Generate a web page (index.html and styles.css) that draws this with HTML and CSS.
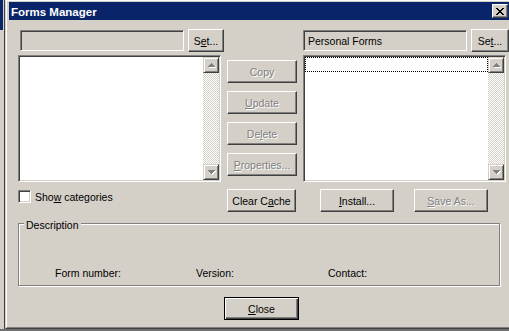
FILE: index.html
```html
<!DOCTYPE html>
<html>
<head>
<meta charset="utf-8">
<title>Forms Manager</title>
<link rel="stylesheet" href="styles.css">
</head>
<body>
<div class="screen">
  <div class="behind"><div class="behind-cap"></div></div>
  <div class="window">
    <div class="window-inner">
      <div class="titlebar">
        <span class="title">Forms Manager</span>
        <div class="cap-btn">
          <svg width="8" height="7" viewBox="0 0 8 7" shape-rendering="crispEdges"><path fill="#000" d="M0 0h2v1h-2z M6 0h2v1h-2z M1 1h2v1h-2z M5 1h2v1h-2z M2 2h4v1h-4z M3 3h2v1h-2z M2 4h4v1h-4z M1 5h2v1h-2z M5 5h2v1h-2z M0 6h2v1h-2z M6 6h2v1h-2z"/></svg>
        </div>
      </div>
      <div class="content">
        <div class="columns">
          <div class="col-side">
            <div class="field-row">
              <div class="field"></div>
              <div class="btn btn-set-left">S<u>e</u>t...</div>
            </div>
            <div class="listbox">
              <div class="list-area"></div>
              <div class="scrollbar">
                <div class="sb-btn"><svg width="8" height="5" viewBox="0 0 8 5" shape-rendering="crispEdges"><path fill="#fff" d="M4 1h1v1h1v1h1v1h1v1H1V4h1V3h1V2h1z"/><path fill="#808080" d="M3 0h1v1h1v1h1v1h1v1H0V3h1V2h1V1h1z"/></svg></div>
                <div class="sb-track"></div>
                <div class="sb-btn"><svg width="8" height="5" viewBox="0 0 8 5" shape-rendering="crispEdges"><path fill="#fff" d="M1 1h7v1h-1v1h-1v1h-1v1h-1V4H3V3H2V2H1z"/><path fill="#808080" d="M0 0h7v1h-1v1h-1v1h-1v1h-1V3H2V2H1V1H0z"/></svg></div>
              </div>
            </div>
            <div class="check-row">
              <span class="checkbox"></span>
              <span class="check-label">Sho<u>w</u> categories</span>
            </div>
          </div>
          <div class="col-mid">
            <div class="btn btn-mid dis">Copy</div>
            <div class="btn btn-mid dis"><u>U</u>pdate</div>
            <div class="btn btn-mid dis">De<u>l</u>ete</div>
            <div class="btn btn-mid dis"><u>P</u>roperties...</div>
            <div class="btn btn-mid btn-clear">Clear C<u>a</u>che</div>
          </div>
          <div class="col-side">
            <div class="field-row field-row-right">
              <div class="field">Personal Forms</div>
              <div class="btn btn-set-right">Se<u>t</u>...</div>
            </div>
            <div class="listbox">
              <div class="list-area"><div class="focus-item"></div></div>
              <div class="scrollbar">
                <div class="sb-btn"><svg width="8" height="5" viewBox="0 0 8 5" shape-rendering="crispEdges"><path fill="#fff" d="M4 1h1v1h1v1h1v1h1v1H1V4h1V3h1V2h1z"/><path fill="#808080" d="M3 0h1v1h1v1h1v1h1v1H0V3h1V2h1V1h1z"/></svg></div>
                <div class="sb-track"></div>
                <div class="sb-btn"><svg width="8" height="5" viewBox="0 0 8 5" shape-rendering="crispEdges"><path fill="#fff" d="M1 1h7v1h-1v1h-1v1h-1v1h-1V4H3V3H2V2H1z"/><path fill="#808080" d="M0 0h7v1h-1v1h-1v1h-1v1h-1V3H2V2H1V1H0z"/></svg></div>
              </div>
            </div>
            <div class="btn-row">
              <div class="btn btn-wide"><u>I</u>nstall...</div>
              <div class="btn btn-wide dis"><u>S</u>ave As...</div>
            </div>
          </div>
        </div>
        <div class="group">
          <span class="legend">Description</span>
          <span class="info info-form">Form number:</span>
          <span class="info info-version">Version:</span>
          <span class="info">Contact:</span>
        </div>
        <div class="close-row">
          <div class="btn btn-default"><u>C</u>lose</div>
        </div>
      </div>
    </div>
  </div>
</div>
</body>
</html>
```

FILE: styles.css
```css
body {
  margin: 0;
  background: #6f6f6f;
  font-family: "Liberation Sans", Arial, sans-serif;
  font-size: 10.5px;
  color: #000;
}

.screen {
  display: flex;
  width: 509px;
  height: 331px;
  overflow: hidden;
}

.behind {
  width: 4px;
  height: 329px;
  flex: none;
  background: #d4d0c8;
  border-right: 1px solid #404040;
}

.behind-cap {
  width: 3px;
  height: 30px;
  background: #0a246a;
}

.window {
  flex: 1;
  min-width: 0;
  height: 329px;
  box-sizing: border-box;
  background: #d4d0c8;
  border-top: 1px solid #fff;
  border-left: 1px solid #d4d0c8;
  border-bottom: 1px solid #404040;
  display: flex;
  flex-direction: column;
}

.window-inner {
  flex: 1;
  border-left: 1px solid #fff;
  border-bottom: 1px solid #808080;
  padding: 1px 0 0 2px;
}

.titlebar {
  height: 18px;
  background: #0a246a;
  display: flex;
  align-items: center;
  justify-content: space-between;
  padding-left: 2px;
}

.title {
  color: #fff;
  font-weight: bold;
  font-size: 11.5px;
  line-height: 18px;
  padding-top: 1px;
}

.cap-btn {
  width: 16px;
  height: 14px;
  box-sizing: border-box;
  margin-right: 1px;
  background: #d4d0c8;
  border: 1px solid;
  border-color: #fff #404040 #404040 #fff;
  box-shadow: inset -1px -1px 0 #808080;
  display: flex;
  align-items: center;
  justify-content: center;
  padding-right: 1px;
}

.cap-btn svg,
.sb-btn svg {
  display: block;
}

.content {
  padding: 9px 0 0 9px;
}

.columns {
  display: flex;
  gap: 6px;
}

.col-side {
  width: 203px;
  flex: none;
}

.field-row {
  display: flex;
  height: 23px;
  margin-left: 2px;
  gap: 4px;
}

.field-row-right {
  margin-left: 0;
}

.field {
  width: 164px;
  height: 21px;
  margin-top: 1px;
  flex: none;
  box-sizing: border-box;
  border: 1px solid;
  border-color: #808080 #fff #fff #808080;
  box-shadow: inset 1px 1px 0 #404040, inset -1px -1px 0 #d4d0c8;
  background: #d4d0c8;
  padding-left: 4px;
  display: flex;
  align-items: center;
}

.btn {
  box-sizing: border-box;
  height: 23px;
  flex: none;
  display: flex;
  align-items: center;
  justify-content: center;
  background: #d4d0c8;
  border: 1px solid;
  border-color: #fff #404040 #404040 #fff;
  box-shadow: inset -1px -1px 0 #808080;
  white-space: nowrap;
}

.btn-set-left {
  width: 36px;
}

.btn-set-right {
  width: 38px;
}

u {
  text-decoration-thickness: 1px;
  text-underline-offset: 1px;
}

.dis {
  color: #808080;
  text-shadow: 1px 1px 0 #fff;
}

.listbox {
  margin-top: 3px;
  width: 203px;
  height: 127px;
  box-sizing: border-box;
  border: 1px solid;
  border-color: #808080 #fff #fff #808080;
  box-shadow: inset 1px 1px 0 #404040, inset -1px -1px 0 #d4d0c8;
  padding: 1px;
  background: #fff;
  display: flex;
}

.list-area {
  flex: 1;
  background: #fff;
}

.focus-item {
  height: 15px;
  box-sizing: border-box;
  border: 1px dotted #000;
}

.scrollbar {
  width: 16px;
  flex: none;
  display: flex;
  flex-direction: column;
}

.sb-btn {
  height: 16px;
  box-sizing: border-box;
  background: #d4d0c8;
  border: 1px solid;
  border-color: #d4d0c8 #404040 #404040 #d4d0c8;
  box-shadow: inset 1px 1px 0 #fff, inset -1px -1px 0 #808080;
  display: flex;
  align-items: center;
  justify-content: center;
  padding-left: 1px;
}

.sb-track {
  flex: 1;
  background-color: #d4d0c8;
  background-image: repeating-conic-gradient(#fff 0 25%, #d4d0c8 0 50%);
  background-size: 2px 2px;
}

.check-row {
  display: flex;
  align-items: flex-start;
  gap: 4px;
  height: 23px;
  margin-top: 7px;
}

.checkbox {
  width: 13px;
  height: 13px;
  margin-top: 1px;
  flex: none;
  box-sizing: border-box;
  border: 1px solid;
  border-color: #808080 #fff #fff #808080;
  box-shadow: inset 1px 1px 0 #404040, inset -1px -1px 0 #d4d0c8;
  background: #fff;
}

.check-label {
  line-height: 13px;
  margin-top: 2px;
}

.col-mid {
  width: 70px;
  flex: none;
  padding-top: 31px;
  display: flex;
  flex-direction: column;
  gap: 8px;
}

.btn-mid {
  width: 70px;
}

.btn-clear {
  margin-top: 5px;
  width: 69px;
}

.btn-row {
  display: flex;
  gap: 20px;
  margin-top: 7px;
  margin-left: 17px;
}

.btn-wide {
  width: 74px;
}

.group {
  position: relative;
  margin-top: 11px;
  width: 482px;
  height: 63px;
  box-sizing: border-box;
  border: 1px solid #808080;
  box-shadow: inset 1px 1px 0 #fff, 1px 1px 0 #fff;
  padding: 43px 0 0 36px;
  display: flex;
  line-height: 12px;
}

.legend {
  position: absolute;
  top: -5px;
  left: 5px;
  padding: 0 2px;
  line-height: 13px;
  background: #d4d0c8;
}

.info-form {
  width: 141px;
}

.info-version {
  width: 132px;
}

.close-row {
  display: flex;
  margin-top: 11px;
  padding-left: 206px;
}

.btn-default {
  width: 75px;
  border: 1px solid #000;
  box-shadow: inset 1px 1px 0 #fff, inset -1px -1px 0 #404040, inset -2px -2px 0 #808080;
}
```
